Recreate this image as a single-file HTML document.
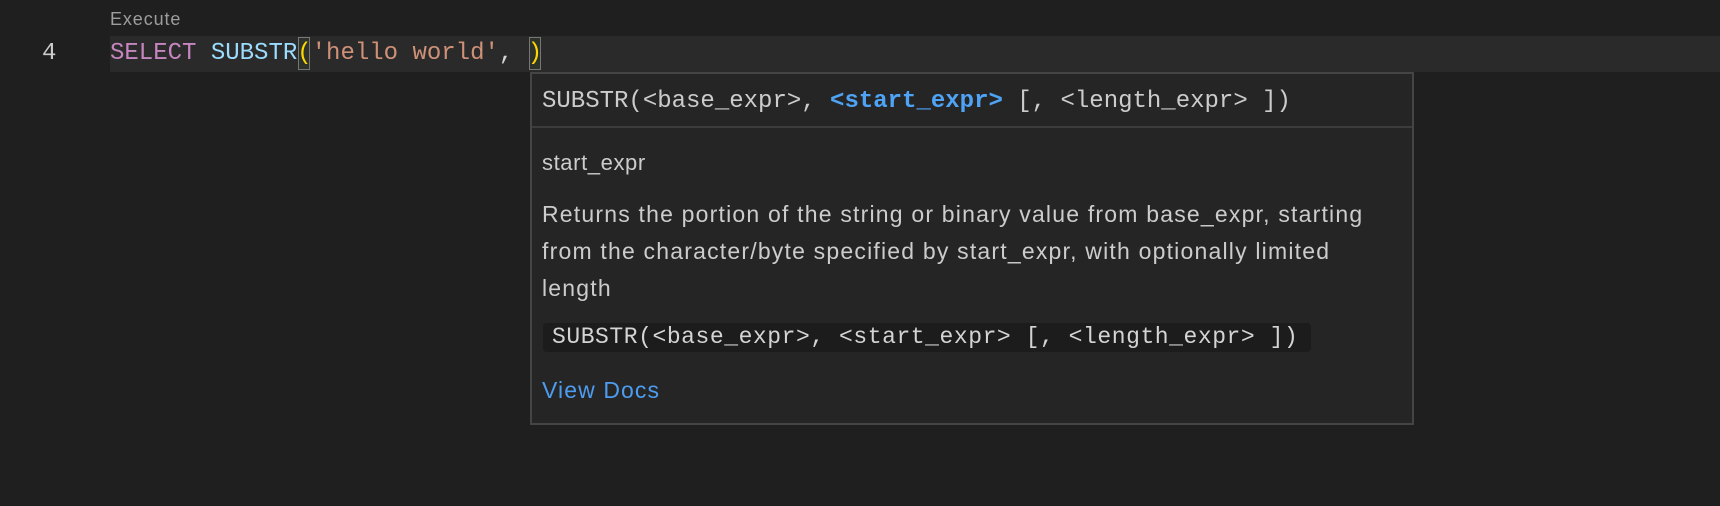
<!DOCTYPE html>
<html><head><meta charset="utf-8"><style>
html,body{margin:0;padding:0;background:#1f1f1f;width:1720px;height:506px;overflow:hidden;position:relative}
.m{font-family:"Liberation Mono",monospace;white-space:pre;position:absolute}
.s{font-family:"Liberation Sans",sans-serif;position:absolute;white-space:pre}
</style></head><body>
<div class="s" style="left:110px;top:9px;font-size:18px;letter-spacing:0.9px;color:#9d9d9d">Execute</div>
<div style="position:absolute;left:110px;top:36px;width:1610px;height:36px;background:#2a2a2a"></div>
<div class="m" style="left:42px;top:40px;font-size:24px;color:#cccccc">4</div>
<div style="position:absolute;left:298px;top:37px;width:12px;height:33px;border:1px solid #777;box-sizing:border-box;background:#2d332b"></div>
<div style="position:absolute;left:529px;top:37px;width:12px;height:33px;border:1px solid #777;box-sizing:border-box;background:#2d332b"></div>
<div class="m" style="left:110px;top:40px;font-size:24px;color:#d4d4d4"><span style="color:#c586c0">SELECT</span> <span style="color:#9cdcfe">SUBSTR</span><span style="color:#ffd700">(</span><span style="color:#ce9178">'hello world'</span>, <span style="color:#ffd700">)</span></div>
<div style="position:absolute;left:530px;top:72px;width:884px;height:353px;background:#252526;border:2px solid #454545;box-sizing:border-box"></div>
<div style="position:absolute;left:532px;top:126px;width:880px;height:2px;background:#3c3c3c"></div>
<div class="m" style="left:542px;top:88px;font-size:24px;color:#cccccc">SUBSTR(&lt;base_expr&gt;, <b style="color:#4fa3f5">&lt;start_expr&gt;</b> [, &lt;length_expr&gt; ])</div>
<div class="s" style="left:542px;top:150px;font-size:22px;letter-spacing:0.6px;color:#cccccc">start_expr</div>
<div class="s" style="left:542px;top:196px;font-size:23px;letter-spacing:1.2px;line-height:37px;color:#cccccc">Returns the portion of the string or binary value from base_expr, starting
from the character/byte specified by start_expr, with optionally limited
length</div>
<div style="position:absolute;left:543px;top:323px;width:768px;height:29px;background:#1c1c1c;border-radius:4px"></div>
<div class="m" style="left:552px;top:324px;font-size:23px;letter-spacing:0.55px;color:#d4d4d4">SUBSTR(&lt;base_expr&gt;, &lt;start_expr&gt; [, &lt;length_expr&gt; ])</div>
<div class="s" style="left:542px;top:377px;font-size:23px;letter-spacing:1.1px;color:#4d9cf0">View Docs</div>
</body></html>
